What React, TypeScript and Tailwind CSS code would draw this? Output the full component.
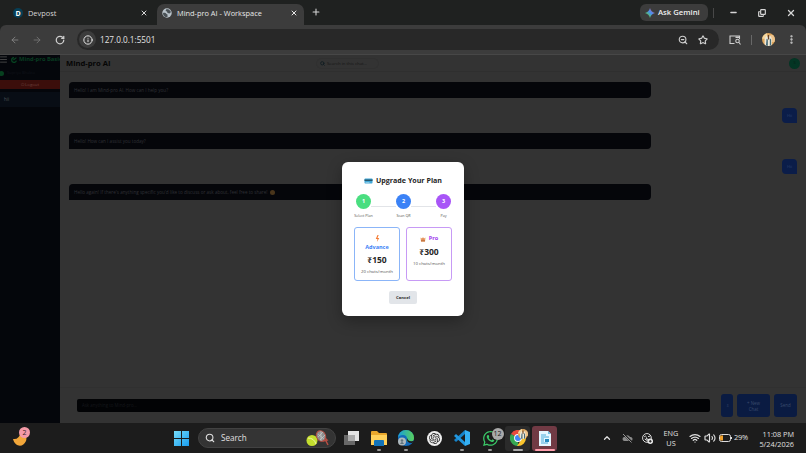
import { Menu, Minus, MoreVertical, Plus, RotateCw, Search, Star, X, ZoomOut, ArrowLeft, ArrowRight, Info, ChevronUp, Wifi, Volume2, Copy } from "lucide-react";
import { FaWhatsapp } from "react-icons/fa";
import { SiOpenai } from "react-icons/si";

const messages = [
  { bot: "Hello! I am Mind-pro AI. How can I help you?", user: "Hii" },
  { bot: "Hello! How can I assist you today?", user: "Hii" },
  { bot: "Hello again! If there's anything specific you'd like to discuss or ask about, feel free to share!", emoji: true },
];

const steps = [
  { label: "Select Plan", color: "bg-[#4ade80]" },
  { label: "Scan QR", color: "bg-[#3b82f6]" },
  { label: "Pay", color: "bg-[#a855f7]" },
];

const Globe = () => (
  <svg viewBox="0 0 20 20" className="size-[10px] shrink-0">
    <circle cx="10" cy="10" r="9.5" fill="#b9c3ca" />
    <path d="M2 10c3-1 6 0 7 2l2 1v5l-4 0c-3-1-5-4-5-8M9 2l5 1 4 5-3 3-4-1-1-3-3-1z" fill="#4a5156" />
  </svg>
);

const Sparkle = () => (
  <svg viewBox="0 0 20 20" className="size-[10px]">
    <defs>
      <linearGradient id="gem" x1="0" y1="1" x2="1" y2="0">
        <stop offset="0" stopColor="#f4c632" />
        <stop offset=".3" stopColor="#55b879" />
        <stop offset=".55" stopColor="#4b8df5" />
        <stop offset="1" stopColor="#e65358" />
      </linearGradient>
    </defs>
    <path d="M10 0Q12 8 20 10Q12 12 10 20Q8 12 0 10Q8 8 10 0Z" fill="url(#gem)" />
  </svg>
);

const Avatar = ({ className }: { className: string }) => (
  <svg viewBox="0 0 20 20" className={className}>
    <defs>
      <clipPath id="face">
        <circle cx="10" cy="10" r="10" />
      </clipPath>
    </defs>
    <g clipPath="url(#face)">
      <path d="M0 0h20v20H0z" fill="#dfa65b" />
      <path d="M0 0h8v9H0z" fill="#f5d8a0" />
      <path d="M13 3h7v11h-7z" fill="#edc38b" />
      <path d="M4 20V9l3-5 3 4 2-5 3 5v12z" fill="#eee8d8" />
      <path d="M7 9l2 1v10H6zM12 8l2 2v10h-2z" fill="#466b78" />
      <path d="M9 3h2v7H9z" fill="#664229" />
    </g>
  </svg>
);

const TitleBar = () => (
  <div className="flex h-[25px] items-end bg-[#1f2120] text-[#d6d6d6]">
    <div className="flex h-full w-[157px] items-center pt-px pl-[13px]">
      <span className="flex size-[10px] items-center justify-center rounded-full bg-[#073f56] text-[7px] font-bold text-white">D</span>
      <span className="ml-[5px] flex-1 pt-px text-[7.400px]">Devpost</span>
      <X className="mr-[9px] size-2" strokeWidth={3} />
    </div>
    <div className="flex h-[21px] w-[147px] items-center rounded-t-[7px] bg-[#3c3c3c] pr-[6px] pb-[3px] pl-[5px] text-[#e8e8e8]">
      <Globe />
      <span className="ml-[5px] flex-1 pt-px text-[7.400px] whitespace-nowrap">Mind-pro AI - Workspace</span>
      <X className="size-2" strokeWidth={3} />
    </div>
    <Plus className="mb-[8px] ml-[7px] size-[10px]" strokeWidth={2.500} />
    <div className="ml-auto flex h-full items-center">
      <div className="flex h-[17px] w-[68px] items-center gap-[3px] rounded-[6px] bg-[#3c3c3c] pl-[5px] text-[7.700px] font-semibold whitespace-nowrap text-[#eee]">
        <Sparkle />
        Ask Gemini
      </div>
      <span className="ml-[5px] h-[10px] w-px bg-[#484848]" />
      <Minus className="ml-[15px] size-[9px]" strokeWidth={3.500} />
      <Copy className="ml-[20px] size-[8px] -scale-y-100" strokeWidth={3.500} />
      <X className="mr-[10px] ml-[20px] size-[10px]" strokeWidth={3} />
    </div>
  </div>
);

const Toolbar = () => (
  <div className="bg-[#1f2120]">
    <div className="flex h-[30px] items-center rounded-t-[6px] border-b border-[#474747] bg-[#3c3c3c] text-[#cfcfcf]">
      <ArrowLeft className="ml-[10px] size-[10px] text-[#888]" />
      <ArrowRight className="ml-[12px] size-[10px] text-[#777]" />
      <RotateCw className="ml-[13px] size-[10px]" strokeWidth={3} />
      <div className="ml-[12px] flex h-[21px] w-[642px] items-center rounded-full bg-[#282828] pr-[11px] pl-[2px]">
        <span className="flex size-[17px] items-center justify-center rounded-full bg-[#3c3c3c]">
          <Info className="size-[10px] text-[#e5e5e5]" strokeWidth={2.400} />
        </span>
        <span className="ml-[4px] flex-1 pt-px text-[8.200px] text-[#e3e3e3]">127.0.0.1:5501</span>
        <ZoomOut className="mr-[10px] size-[10px]" strokeWidth={2.700} />
        <Star className="size-[10px]" strokeWidth={2.700} />
      </div>
      <svg viewBox="0 0 24 20" className="ml-[10px] h-[10px] w-3" fill="none" stroke="#cfcfcf" strokeWidth="2.200">
        <path d="M11 17H2V2h19v6" />
        <path d="M13 3h8v3h-8z" fill="#cfcfcf" stroke="none" />
        <circle cx="17" cy="12" r="3.500" />
        <path d="m20 15 3 4" />
      </svg>
      <span className="ml-[10px] h-[10px] w-px bg-[#686868]" />
      <Avatar className="ml-[10px] size-[13px]" />
      <MoreVertical className="ml-[11px] size-[11px]" strokeWidth={3} />
    </div>
  </div>
);

const Sidebar = () => (
  <div className="w-[60px] shrink-0 overflow-hidden bg-[#04060b] whitespace-nowrap">
    <div className="flex h-[9px] items-center text-[5.800px] font-bold text-[#083d21]">
      <Menu className="-ml-px size-[9px] shrink-0 text-[#555]" />
      <svg viewBox="0 0 10 10" className="mr-[2px] ml-[3px] size-[6px] shrink-0" fill="none" stroke="#074723" strokeWidth="2">
        <path d="M5 1a4 4 0 1 0 4 5M4 5l5-4" />
      </svg>
      Mind-pro Basic
    </div>
    <div className="mt-[6px] flex h-[6px] items-center gap-[3px] text-[4px] text-[#10131a]">
      <span className="-ml-px size-[5px] rounded-full bg-[#07401f]" />
      Supriya Bhakta
    </div>
    <div className="mt-[4px] flex h-[9px] items-center justify-center bg-[#3b0e0b] text-[4.300px] text-[#6d413e]">⏻ Logout</div>
    <div className="mt-[3px] flex h-[15px] items-center bg-[#080d15] pl-[4px] text-[4.500px] text-[#50545b]">hii</div>
  </div>
);

const Chat = () => (
  <div className="flex flex-1 flex-col bg-[#333] px-[9px]">
    <div className="-mx-[9px] flex h-[17px] items-center border-b border-[#2f2f2f] pl-[6px]">
      <span className="w-[250px] pt-px text-[7.600px] font-bold text-[#050505]">Mind-pro AI</span>
      <div className="flex h-[11px] w-[63px] items-center gap-[2px] rounded-full border border-[#303030] pt-px pl-[3px] text-[4.300px] whitespace-nowrap text-[#161616]">
        <Search className="size-[5px] text-[#101d22]" strokeWidth={4} />
        Search in this chat...
      </div>
      <span className="mr-[6px] ml-auto flex size-[11px] items-center justify-center rounded-full bg-[#043524] text-[4px] text-[#071d14]">S</span>
    </div>
    <div className="mt-[10px] flex flex-1 flex-col gap-[10px]">
      {messages.map((m, i) => (
        <div key={i} className="flex flex-col gap-[10px]">
          <div className="flex h-4 w-[582px] items-center rounded-[4px] rounded-bl-none bg-[#05060a] pl-[5px] text-[4.600px] whitespace-nowrap text-[#303136]">
            {m.bot}
            {m.emoji && <span className="ml-[2px] size-[5px] rounded-full bg-[#49351b]" />}
          </div>
          {m.user && (
            <div className="flex h-[15px] w-[15px] items-center justify-center self-end rounded-[4px] rounded-br-none bg-[#0b1d49] text-[4px] text-[#2d426d]">
              {m.user}
            </div>
          )}
        </div>
      ))}
    </div>
    <div className="-mx-[9px] flex h-[36px] items-center border-t border-[#303030] pr-[9px] pl-[17px] text-[4.400px] text-[#3b4b6d]">
      <div className="flex h-[13px] w-[633px] items-center rounded-[2px] bg-[#020305] pl-[5px] text-[#15171b]">Ask anything to Mind-pro...</div>
      <div className="ml-[11px] flex h-[23px] w-3 items-center justify-center rounded-[3px] bg-[#0a1b42]">⇩</div>
      <div className="ml-[4px] flex h-[23px] w-[33px] items-center justify-center rounded-[3px] bg-[#0a1b42] text-center leading-[6px]">
        + New
        <br />
        Chat
      </div>
      <div className="ml-[4px] flex h-[23px] w-[23px] items-center justify-center rounded-[3px] bg-[#0a1b42]">Send</div>
    </div>
  </div>
);

const UpgradeModal = () => (
  <div className="absolute inset-0 flex items-center justify-center">
    <div className="flex h-[154px] w-[122px] flex-col items-center rounded-[6px] bg-white px-3 pt-3 text-[#262626] shadow-[0_5px_15px_rgba(0,0,0,0.3)]">
      <div className="flex h-3 items-center gap-[3px] pt-px text-[7.100px] font-bold whitespace-nowrap">
        <svg viewBox="0 0 16 12" className="mt-px h-[6px] w-[9px]">
          <rect y="1" width="16" height="10" rx="1.500" fill="#42a7d7" />
          <path d="M0 3h16v3H0z" fill="#25586f" />
          <path d="M2 8h8v1H2z" fill="#d0eaf4" />
        </svg>
        Upgrade Your Plan
      </div>
      <div className="mt-[8px] ml-px flex items-start">
        {steps.map((s, i) => (
          <div key={s.label} className="flex items-start">
            {i > 0 && <span className="mt-3 h-px w-[25px] bg-[#e2e4e8]" />}
            <div className="flex w-[15px] flex-col items-center">
              <span className={`flex size-[15px] items-center justify-center rounded-full pt-px text-[5.500px] font-bold text-white ${s.color}`}>{i + 1}</span>
              <span className="mt-[4px] text-[3.700px] leading-[6px] whitespace-nowrap text-[#555]">{s.label}</span>
            </div>
          </div>
        ))}
      </div>
      <div className="mt-[8px] flex gap-[6px] text-center">
        <div className="flex h-[54px] w-[46px] flex-col items-center rounded-[3px] border border-[#8bb5f8] pt-[7px]">
          <svg viewBox="0 0 8 12" className="h-[7px] w-[5px]">
            <path d="M4 0 1 7h3L3 12l4-7H4l2-5z" fill="#f57b32" />
          </svg>
          <span className="h-[8px] text-[5.500px] leading-[10px] font-bold text-[#3b82f6]">Advance</span>
          <span className="mt-[4px] text-[8.500px] leading-[11px] font-bold">₹150</span>
          <span className="mt-[3px] text-[4.350px] leading-[6px] whitespace-nowrap text-[#555]">20 chats/month</span>
        </div>
        <div className="flex h-[54px] w-[46px] flex-col items-center rounded-[3px] border border-[#c79af5] pt-[7px]">
          <span className="flex h-2 items-center gap-[3px] text-[5.600px] font-bold text-[#a23ded]">
            <svg viewBox="0 0 12 12" className="size-[6px]">
              <path d="M1 3l3 2 2-3 2 3 3-2-1 8H2z" fill="#e8a060" />
              <path d="M2 8h8v3H2z" fill="#c77742" />
              <circle cx="6" cy="6" r="1" fill="#d54969" />
            </svg>
            Pro
          </span>
          <span className="mt-[3px] text-[8.500px] leading-[11px] font-bold">₹300</span>
          <span className="mt-[3px] text-[4.350px] leading-[6px] whitespace-nowrap text-[#555]">10 chats/month</span>
        </div>
      </div>
      <div className="mt-[10px] flex h-[13px] w-7 items-center justify-center rounded-[2px] bg-[#e2e5e9] pt-px text-[4.200px] font-bold">Cancel</div>
    </div>
  </div>
);

const Taskbar = () => (
  <div className="flex h-[30px] items-center bg-[#1c1c1c] text-[#e0e0e0]">
    <div className="relative ml-[13px] h-[18px] w-[17px]">
      <svg viewBox="0 0 17 18" className="size-full">
        <path d="M0 10q6 1 8-7 7 3 5 9c-3 7-11 6-13-2" fill="#f1a63a" />
      </svg>
      <span className="absolute -top-[2px] right-0 flex size-[11px] items-center justify-center rounded-full bg-[#f49aa7] text-[7px] text-[#351e23]">2</span>
    </div>
    <svg viewBox="0 0 15 15" className="ml-[144px] size-[15px] shrink-0">
      <defs>
        <linearGradient id="win" x1="0" y1="0" x2="1" y2="1">
          <stop stopColor="#75dcfa" />
          <stop offset="1" stopColor="#189cef" />
        </linearGradient>
      </defs>
      <path d="M0 0h7v7H0zM8 0h7v7H8zM0 8h7v7H0zM8 8h7v7H8z" fill="url(#win)" />
    </svg>
    <div className="ml-[9px] flex h-5 w-[138px] items-center rounded-full border border-[#424242] bg-[#343434] pl-[6px]">
      <Search className="size-[10px]" strokeWidth={2.600} />
      <span className="ml-[6px] flex-1 text-[8.100px]">Search</span>
      <svg viewBox="0 0 24 16" className="mr-[5px] h-4 w-6">
        <circle cx="6" cy="10.500" r="5.500" fill="#c4de2e" />
        <path d="M2 8q6 0 8 6" fill="none" stroke="#eff6a7" />
        <ellipse cx="15" cy="6" rx="4.500" ry="5.500" fill="#8f8f8f" stroke="#b74e43" transform="rotate(-25 15 6)" />
        <path d="m12 4 6 5M12 7l5-5M14 10l5-5M15 1v10" stroke="#ddd" strokeWidth=".5" />
        <path d="m17 11 4-1-2-2M20 11l2 4" fill="none" stroke="#b74e43" strokeWidth="1.500" />
      </svg>
    </div>
    <svg viewBox="0 0 15 14" className="ml-2 h-[14px] w-[15px] shrink-0">
      <path d="M0 4h11v10H0z" fill="#686868" />
      <path d="M4 0h11v10H4z" fill="#e4e4e4" />
      <path d="M4 4h7v6H4z" fill="#aaa" />
    </svg>
    <AppIcon gap="ml-[9px]">
      <svg viewBox="0 0 16 15" className="h-[15px] w-4">
        <path d="M0 1q0-1 1-1h5l2 2h7q1 0 1 1v10H0z" fill="#e9a72c" />
        <path d="M0 4h16v10H0z" fill="#ffd15b" />
        <path d="M3 10q0-1 1-1h8q1 0 1 1v5H3z" fill="#1374ba" />
      </svg>
    </AppIcon>
    <AppIcon gap="ml-[5px]">
      <svg viewBox="0 0 16 16" className="size-4">
        <defs>
          <linearGradient id="edge" x1="0" y1="0" x2="1" y2="0">
            <stop stopColor="#189ddb" />
            <stop offset="1" stopColor="#5ad15a" />
          </linearGradient>
        </defs>
        <circle cx="8" cy="8" r="8" fill="#126bbb" />
        <path d="M0 8A8 8 0 0 1 16 8q0 4-5 4-3 0-2-3Q9 5 5 5 1 5 0 8" fill="url(#edge)" />
        <path d="M9 8q-1 5 5 5l1-1q1-1 0-1-3 1-5-1z" fill="#1c1c1c" />
        <circle cx="4" cy="11.500" r="4" fill="#aeb8bd" />
        <circle cx="4" cy="10.500" r="1.300" fill="#60737d" />
        <path d="M2 14q2-4 4 0z" fill="#60737d" />
      </svg>
    </AppIcon>
    <AppIcon gap="ml-[6px]" idle>
      <span className="flex size-[15px] items-center justify-center rounded-full bg-[#eee] text-[#222]">
        <SiOpenai className="size-[11px]" />
      </span>
    </AppIcon>
    <AppIcon gap="ml-[6px]">
      <svg viewBox="0 0 16 16" className="size-4">
        <path d="M11 0 16 2v12l-5 2z" fill="#35b0f3" />
        <path d="m11 4-9 8-2-2L11 0z" fill="#1683ca" />
        <path d="m11 12-9-8-2 2 11 10z" fill="#2197df" />
      </svg>
    </AppIcon>
    <AppIcon gap="ml-[6px]">
      <FaWhatsapp className="size-[17px] text-[#3ac968]" />
      <span className="absolute -top-[2px] -right-[5px] flex size-3 items-center justify-center rounded-full bg-[#aaa] text-[7px] text-[#202020]">12</span>
    </AppIcon>
    <div className="relative ml-[4px] flex h-[25px] w-[25px] shrink-0 items-center justify-center rounded-[3px] bg-[#2b2b2b]">
      <svg viewBox="0 0 16 16" className="size-4">
        <path d="M8 8 1 4A8 8 0 0 1 15 4z" fill="#e74b3c" />
        <path d="M8 8 1 4a8 8 0 0 0 7 12z" fill="#35a853" />
        <path d="M8 8h8a8 8 0 0 1-8 8l-1 0 4-6z" fill="#fbc52d" />
        <path d="M8 4h7a8 8 0 0 1 1 4H8z" fill="#fbc52d" />
        <circle cx="8" cy="8" r="3.900" fill="#fff" />
        <circle cx="8" cy="8" r="3" fill="#4287f5" />
      </svg>
      <Avatar className="absolute top-[3px] right-[2px] size-[10px]" />
      <span className="absolute bottom-0 h-[2px] w-[10px] rounded-full bg-[#aaa]" />
    </div>
    <div className="relative ml-[2px] flex h-[25px] w-[25px] shrink-0 items-center justify-center rounded-[3px] bg-[#713a44]">
      <svg viewBox="0 0 12 15" className="h-[15px] w-3">
        <path d="M0 0h9l3 3v12H0z" fill="#e5f6ff" />
        <path d="M9 0v3h3" fill="#76bfe2" />
        <path d="M2 4h5M2 6h8M2 8h3M2 10h3M2 12h7" stroke="#4cacda" />
        <path d="M6 8h4v3H6z" fill="#268bc0" />
      </svg>
      <span className="absolute bottom-0 h-[2px] w-[20px] rounded-full bg-[#ff9ead]" />
    </div>
    <ChevronUp className="ml-auto size-[10px]" strokeWidth={3} />
    <svg viewBox="0 0 22 20" className="ml-[10px] h-[10px] w-[11px]">
      <path d="M5 16a4 4 0 0 1 0-8 6 6 0 0 1 11 0 4 4 0 0 1 2 8z" fill="#8b8b8b" />
      <path d="m3 2 16 16" stroke="#1c1c1c" strokeWidth="4" />
      <path d="m2 2 17 17" stroke="#aaa" strokeWidth="1.700" />
    </svg>
    <svg viewBox="0 0 20 20" className="ml-[9px] size-[11px]" fill="none" stroke="#ddd" strokeWidth="1.800">
      <circle cx="9" cy="9" r="8" />
      <path d="M4 7q2-3 4 0M11 7q2-3 4 0M5 11q4 5 8 0M8 8v3h3" />
      <circle cx="15" cy="15" r="5" fill="#eee" stroke="none" />
      <path d="M12.500 15h5M15 12.500v5" stroke="#222" />
    </svg>
    <div className="ml-[9px] w-[18px] text-center text-[7.300px] leading-[10px]">
      ENG
      <br />
      US
    </div>
    <Wifi className="ml-[9px] size-[12px]" strokeWidth={2.500} />
    <Volume2 className="ml-[3px] size-[12px]" strokeWidth={2.300} />
    <svg viewBox="0 0 14 8" className="ml-[3px] h-2 w-[14px]">
      <rect x=".5" y=".5" width="11" height="7" rx="2" fill="none" stroke="#ddd" />
      <path d="M2 1.500h2v5H2q-1 0-1-1v-3q0-1 1-1" fill="#efa02b" />
      <path d="M12.500 3v2" stroke="#ddd" />
    </svg>
    <span className="ml-px w-[15px] text-[7.400px] tracking-[-0.2px]">29%</span>
    <div className="mr-[12px] ml-[8px] w-[37px] pt-px text-right text-[7.300px] leading-[10px] whitespace-nowrap">
      <div>11:08 PM</div>
      <div>5/24/2026</div>
    </div>
  </div>
);

const AppIcon = ({ gap, idle, children }: { gap: string; idle?: boolean; children: React.ReactNode }) => (
  <div className={`relative flex h-[30px] w-[22px] shrink-0 items-center justify-center ${gap}`}>
    <div className="relative">{children}</div>
    {!idle && <span className="absolute bottom-[2px] h-[2px] w-[4px] rounded-full bg-[#999]" />}
  </div>
);

export default function App() {
  return (
    <div className="flex h-[453px] w-[806px] flex-col overflow-hidden bg-[#1c1c1c] font-['Open_Sans','Noto_Sans',sans-serif] leading-none">
      <TitleBar />
      <Toolbar />
      <div className="relative flex h-[368px]">
        <Sidebar />
        <Chat />
        <UpgradeModal />
      </div>
      <Taskbar />
    </div>
  );
}
